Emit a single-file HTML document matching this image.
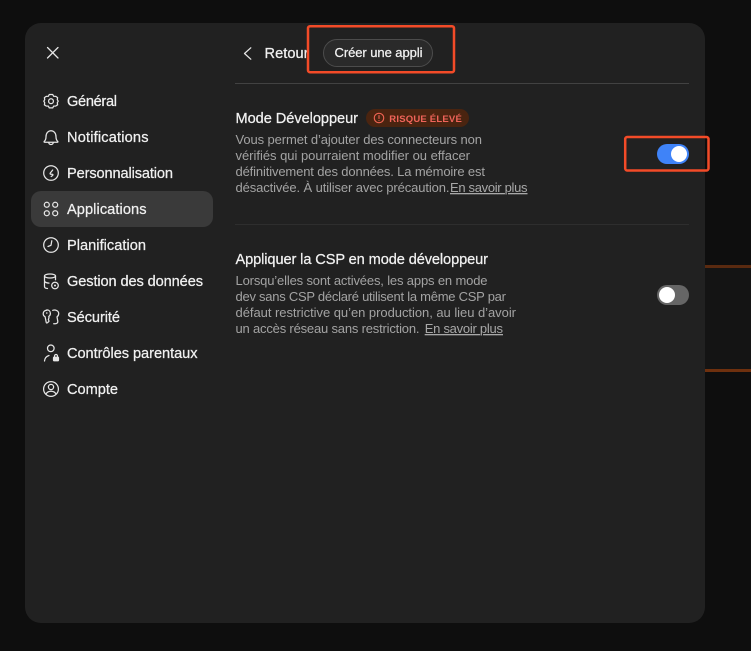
<!DOCTYPE html>
<html lang="fr">
<head>
<meta charset="utf-8">
<title>Applications</title>
<style>
html,body{margin:0;padding:0;width:751px;height:651px;overflow:hidden;background:#0e0e0e}
svg{display:block}
text{font-family:"Liberation Sans",sans-serif;white-space:pre}
.m{font-size:14.6px;fill:#f0f0f0;stroke:#f0f0f0;stroke-width:.25}
.t{font-size:14.6px;fill:#f2f2f2;stroke:#f2f2f2;stroke-width:.25}
.d{font-size:13px;fill:#a3a3a3}
.l{font-size:13px;fill:#a8a8a8;text-decoration:underline}
.i{fill:none;stroke:#e6e6e6;stroke-width:1.25;stroke-linecap:round;stroke-linejoin:round}
</style>
</head>
<body>
<svg width="751" height="651" viewBox="0 0 751 651" xmlns="http://www.w3.org/2000/svg">
<rect width="751" height="651" fill="#0e0e0e"/>
<rect x="705" y="267" width="46" height="103" fill="#141414"/>
<rect x="705" y="265" width="46" height="3" fill="#5a2a10"/>
<rect x="705" y="369" width="46" height="3" fill="#6e300e"/>
<rect x="25" y="23" width="680" height="600" rx="16" fill="#212121"/>

<path class="i" d="M47.500 47.500 58 58M58 47.500 47.500 58" stroke-width="1.500"/>

<rect x="31" y="191" width="182" height="36" rx="10" fill="#3a3a3a"/>

<!-- gear -->
<path class="i" d="M49.300 94.500h3.400l1 1.800 2.100.1 1.800 1.200-.3 2.100.9 1.500-.9 1.500.3 2.100-1.800 1.200-2.100.1-1 1.800h-3.400l-1-1.800-2.100-.1-1.800-1.200.3-2.100-.9-1.500.9-1.500-.3-2.100 1.800-1.200 2.100-.1z"/>
<circle class="i" cx="51" cy="101.200" r="2.400"/>
<!-- bell -->
<path class="i" d="M44.300 141.300c1.500-1.300 1.700-2.400 1.700-4.600 0-3.500 2.100-6 5-6s5 2.500 5 6c0 2.200.2 3.300 1.700 4.600.5.500.2 1-.4 1H44.700c-.6 0-.9-.5-.4-1z"/>
<path class="i" d="M48.700 142.600c.3 1.200 1.200 1.900 2.300 1.900s2-.7 2.300-1.900"/>
<!-- personalisation -->
<circle class="i" cx="51" cy="173" r="7.300"/>
<path class="i" d="M52.700 170 50.300 173c-.5.700-.1 1.300.7 1.300h1.300c.7 0 .9.700.3 1.200l-1.400 1"/>
<!-- apps -->
<circle class="i" cx="46.800" cy="204.800" r="2.500"/>
<circle class="i" cx="55.200" cy="204.800" r="2.500"/>
<circle class="i" cx="46.800" cy="213.200" r="2.500"/>
<circle class="i" cx="55.200" cy="213.200" r="2.500"/>
<!-- clock -->
<circle class="i" cx="51" cy="245" r="7.300"/>
<path class="i" d="M51.800 240.800 51 245.300 48 246.500"/>
<!-- database -->
<ellipse class="i" cx="50" cy="276" rx="5.500" ry="2"/>
<path class="i" d="M44.500 276v10.500c0 1.400 1.400 1.900 3 2M55.500 276v3.800M44.500 281.500c1 1 2.800 1.500 4.500 1.600"/>
<circle class="i" cx="55" cy="285.500" r="3.300"/>
<circle cx="55" cy="285.500" r="1" fill="#e6e6e6"/>
<!-- security -->
<path class="i" d="M46.800 310.200c-2 0-3.600 1.500-3.600 3.400 0 1.400.8 2.600 1.900 3.200l1.100 5.500c.2.800.9.900 1.500.3l1.300-1.400-.6-1.800.6-1.800-.2-1.200c1-.6 1.600-1.700 1.600-3 0-2.300-1.700-3.500-3.600-3.500z"/>
<path class="i" d="M52.700 310.300c2.600-.7 6 .2 6 3.300 0 1.500-.8 2.600-1.700 3.300l.8 4.300c.2 1.500-1 2.600-2.600 2.600h-1.500"/>
<circle cx="46.800" cy="313" r=".8" fill="#e6e6e6"/>
<!-- person lock -->
<circle class="i" cx="50.800" cy="348.300" r="3.300"/>
<path class="i" d="M44.500 361c.3-2.700 2-4.800 4.500-5.500"/>
<rect x="53.300" y="357" width="5.400" height="4" rx=".8" fill="#e6e6e6" stroke="#e6e6e6" stroke-width=".8"/>
<path class="i" d="M54.500 357v-1a1.500 1.500 0 0 1 3 0v1"/>
<!-- account -->
<circle class="i" cx="51" cy="389" r="7.400"/>
<circle class="i" cx="51" cy="387" r="2.600"/>
<path class="i" d="M46 394c.9-1.700 2.700-2.700 5-2.700s4.100 1 5 2.700"/>

<text class="m" x="67" y="106" textLength="50" lengthAdjust="spacing">Général</text>
<text class="m" x="67" y="142" textLength="81.500" lengthAdjust="spacing">Notifications</text>
<text class="m" x="67" y="178" textLength="106" lengthAdjust="spacing">Personnalisation</text>
<text class="m" x="67" y="214" textLength="79.500" lengthAdjust="spacing">Applications</text>
<text class="m" x="67" y="250" textLength="79" lengthAdjust="spacing">Planification</text>
<text class="m" x="67" y="286" textLength="136" lengthAdjust="spacing">Gestion des données</text>
<text class="m" x="67" y="322" textLength="53" lengthAdjust="spacing">Sécurité</text>
<text class="m" x="67" y="358" textLength="130.500" lengthAdjust="spacing">Contrôles parentaux</text>
<text class="m" x="67" y="394" textLength="51" lengthAdjust="spacing">Compte</text>

<path class="i" d="M250.800 47.800 244.500 53.500 250.800 59.200" stroke-width="1.500"/>
<text class="m" x="264.500" y="58" textLength="44" lengthAdjust="spacing">Retour</text>
<rect x="307" y="25" width="148" height="48" fill="#212121"/>
<rect x="323.500" y="39.500" width="109" height="27" rx="13.500" fill="#2a2a2a" stroke="#4c4c4c"/>
<text x="334.500" y="57" font-size="13" fill="#f2f2f2" stroke="#f2f2f2" stroke-width=".25" textLength="88" lengthAdjust="spacing">Créer une appli</text>
<rect x="308" y="26.200" width="146" height="46" rx="2" fill="none" stroke="#f34b28" stroke-width="2.500"/>

<rect x="235" y="83" width="454" height="1" fill="#424242"/>

<text class="t" x="235.500" y="123" textLength="122.500" lengthAdjust="spacing">Mode Développeur</text>
<rect x="366" y="109" width="103" height="18" rx="9" fill="#4a2410"/>
<path d="M379 113.300c2.700 0 4.700 2 4.700 4.700s-2 4.700-4.700 4.700-4.700-2-4.700-4.700 2-4.700 4.700-4.700zM379 115.500v3M379 120.500v.1" fill="none" stroke="#ee6352" stroke-width="1.100" stroke-linecap="round"/>
<text x="389.300" y="122" font-size="9.500" font-weight="700" fill="#f0645a" textLength="72.500" lengthAdjust="spacing">RISQUE ÉLEVÉ</text>

<text class="d" x="235.500" y="144" textLength="246.500" lengthAdjust="spacing">Vous permet d’ajouter des connecteurs non</text>
<text class="d" x="235.500" y="160" textLength="234.500" lengthAdjust="spacing">vérifiés qui pourraient modifier ou effacer</text>
<text class="d" x="235.500" y="176" textLength="249.500" lengthAdjust="spacing">définitivement des données. La mémoire est</text>
<text class="d" x="235.500" y="192" textLength="214" lengthAdjust="spacing">désactivée. À utiliser avec précaution.</text>
<text class="l" x="450" y="192" textLength="77.500" lengthAdjust="spacing">En savoir plus</text>

<rect x="657" y="144" width="32" height="20" rx="10" fill="#3f83f8"/>
<circle cx="679" cy="154" r="8" fill="#fff"/>
<rect x="625.200" y="137" width="83.300" height="33.500" rx="2" fill="none" stroke="#f34b28" stroke-width="2.500"/>

<rect x="235" y="224" width="454" height="1" fill="#2e2e2e"/>

<text class="t" x="235.500" y="264" textLength="252.500" lengthAdjust="spacing">Appliquer la CSP en mode développeur</text>
<text class="d" x="235.500" y="285" textLength="252" lengthAdjust="spacing">Lorsqu’elles sont activées, les apps en mode</text>
<text class="d" x="235.500" y="301" textLength="270.500" lengthAdjust="spacing">dev sans CSP déclaré utilisent la même CSP par</text>
<text class="d" x="235.500" y="317" textLength="280.500" lengthAdjust="spacing">défaut restrictive qu’en production, au lieu d’avoir</text>
<text class="d" x="235.500" y="333" textLength="184" lengthAdjust="spacing">un accès réseau sans restriction.</text>
<text class="l" x="424.700" y="333" textLength="78.300" lengthAdjust="spacing">En savoir plus</text>

<rect x="657" y="285" width="32" height="20" rx="10" fill="#666"/>
<circle cx="667" cy="295" r="8" fill="#fff"/>
</svg>
</body>
</html>
